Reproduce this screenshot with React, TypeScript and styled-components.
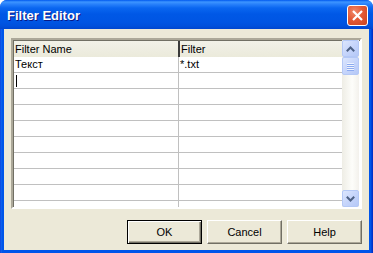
import React from "react";
import styled, { createGlobalStyle } from "styled-components";

const Global = createGlobalStyle`
  html, body { margin: 0; padding: 0; background: #ffffff; }
  body { font-family: "Liberation Sans", Arial, sans-serif; }
`;

const Window = styled.div`
  width: 373px;
  height: 253px;
  box-sizing: border-box;
  display: flex;
  flex-direction: column;
  border-radius: 7px 7px 0 0;
  background: linear-gradient(to right, #0831d9 0, #166aee 1px, #0055ea 2px, #0055ea 371px, #0032c8 372px);
  overflow: hidden;
`;

const TitleBar = styled.div`
  height: 29px;
  flex: none;
  display: flex;
  align-items: center;
  justify-content: space-between;
  padding: 0 5px 0 7px;
  background: linear-gradient(
    to bottom,
    #0058ee 0px,
    #3d95ff 2px,
    #2a82fb 4px,
    #0a66f0 8px,
    #0058e6 14px,
    #0055e3 22px,
    #0050dc 26px,
    #0046cf 29px
  );
`;

const Title = styled.span`
  font-family: "Liberation Sans", Arial, sans-serif;
  font-weight: bold;
  font-size: 13px;
  color: #ffffff;
  text-shadow: 1px 1px 0 #0a1883;
  margin-top: 2px;
`;

const CloseButton = styled.div`
  width: 21px;
  height: 21px;
  box-sizing: border-box;
  border: 1px solid #ffffff;
  border-radius: 3px;
  background: radial-gradient(circle at 35% 30%, #f08a6c 0%, #e35a36 45%, #c8431f 100%);
  display: flex;
  align-items: center;
  justify-content: center;
  margin-top: 2px;
`;

const Body = styled.div`
  flex: 1;
  margin: 0 4px 4px 4px;
  background: #ece9d8;
  padding: 9px 7px 6px 7px;
  display: flex;
  flex-direction: column;
`;

const Grid = styled.div`
  height: 171px;
  box-sizing: border-box;
  border-style: solid;
  border-width: 2px;
  border-color: #aca899 #ffffff #ffffff #aca899;
  box-shadow: inset 1px 1px 0 #716f64;
  display: flex;
  background: #ffffff;
`;

const TableArea = styled.div`
  flex: 1;
  display: flex;
  flex-direction: column;
  overflow: hidden;
  padding-top: 1px;
  padding-left: 1px;
`;

const HeaderRow = styled.div`
  height: 16px;
  flex: none;
  display: flex;
  background: linear-gradient(to bottom, #f2f1e8, #ebeadb);
`;

const HeaderCell = styled.div<{ $w?: number }>`
  ${(p) => (p.$w ? `width: ${p.$w}px; flex: none;` : "flex: 1;")}
  box-sizing: border-box;
  font-size: 11px;
  line-height: 16px;
  color: #000;
  padding-left: 1px;
  white-space: nowrap;
  overflow: hidden;
  border-right: ${(p) => (p.$w ? "2px solid #3a3a3a" : "none")};
`;

const Row = styled.div`
  height: 16px;
  flex: none;
  box-sizing: border-box;
  display: flex;
  border-bottom: 1px solid #c0c0c0;
  background: #ffffff;
`;

const Cell = styled.div<{ $w?: number }>`
  ${(p) => (p.$w ? `width: ${p.$w}px; flex: none;` : "flex: 1;")}
  box-sizing: border-box;
  font-size: 11px;
  line-height: 15px;
  color: #000;
  padding-left: 1px;
  white-space: nowrap;
  overflow: hidden;
  border-right: ${(p) => (p.$w ? "1px solid #c0c0c0" : "none")};
  display: flex;
  align-items: center;
`;

const Caret = styled.span`
  display: block;
  width: 1px;
  height: 12px;
  background: #000;
  margin-left: 1px;
`;

const Scrollbar = styled.div`
  width: 17px;
  flex: none;
  display: flex;
  flex-direction: column;
  background: linear-gradient(to right, #eeede5, #fdfdfa 60%, #f3f1ec);
  margin-right: 1px;
`;

const ScrollButton = styled.div`
  width: 17px;
  height: 17px;
  box-sizing: border-box;
  border: 1px solid #b4c8f6;
  border-radius: 2px;
  background: linear-gradient(135deg, #dce6fd 0%, #c6d5fb 50%, #b5c8f7 100%);
  display: flex;
  align-items: center;
  justify-content: center;
  flex: none;
`;

const Thumb = styled(ScrollButton)`
  height: 18px;
  flex-direction: column;
  gap: 1px;
`;

const Grip = styled.span`
  display: block;
  width: 7px;
  height: 1px;
  background: #eef3fe;
  box-shadow: 0 1px 0 #8caaf0;
`;

const Track = styled.div`
  flex: 1;
`;

const ButtonRow = styled.div`
  margin-top: 11px;
  display: flex;
  justify-content: flex-end;
  gap: 5px;
`;

const Button = styled.div<{ $default?: boolean }>`
  width: 75px;
  height: 24px;
  box-sizing: border-box;
  display: flex;
  align-items: center;
  justify-content: center;
  font-size: 11px;
  color: #000;
  background: #ece9d8;
  border: 1px solid;
  border-color: ${(p) => (p.$default ? "#000000" : "#ffffff #716f64 #716f64 #ffffff")};
  box-shadow: ${(p) =>
    p.$default
      ? "inset 1px 1px 0 #ffffff, inset -1px -1px 0 #716f64, inset -2px -2px 0 #aca899"
      : "inset -1px -1px 0 #aca899"};
`;

const rows = [
  ["Текст", "*.txt"],
  ["", ""],
  ["", ""],
  ["", ""],
  ["", ""],
  ["", ""],
  ["", ""],
  ["", ""],
  ["", ""],
  ["", ""],
];

const Arrow = ({ up }: { up?: boolean }) => (
  <svg width="9" height="6" viewBox="0 0 9 6">
    <path
      d={up ? "M0.8 5.2 L4.5 1.5 L8.2 5.2" : "M0.8 0.8 L4.5 4.5 L8.2 0.8"}
      fill="none"
      stroke="#4d6185"
      strokeWidth="2"
    />
  </svg>
);

export default function App() {
  return (
    <>
      <Global />
      <Window>
        <TitleBar>
          <Title>Filter Editor</Title>
          <CloseButton>
            <svg width="13" height="13" viewBox="0 0 13 13">
              <path d="M2 2 L11 11 M11 2 L2 11" stroke="#fff" strokeWidth="2.2" />
            </svg>
          </CloseButton>
        </TitleBar>
        <Body>
          <Grid>
            <TableArea>
              <HeaderRow>
                <HeaderCell $w={166}>Filter Name</HeaderCell>
                <HeaderCell>Filter</HeaderCell>
              </HeaderRow>
              {rows.map((r, i) => (
                <Row key={i}>
                  <Cell $w={165}>{i === 1 ? <Caret /> : r[0]}</Cell>
                  <Cell>{r[1]}</Cell>
                </Row>
              ))}
            </TableArea>
            <Scrollbar>
              <ScrollButton>
                <Arrow up />
              </ScrollButton>
              <Thumb>
                <Grip />
                <Grip />
                <Grip />
                <Grip />
              </Thumb>
              <Track />
              <ScrollButton>
                <Arrow />
              </ScrollButton>
            </Scrollbar>
          </Grid>
          <ButtonRow>
            <Button $default>OK</Button>
            <Button>Cancel</Button>
            <Button>Help</Button>
          </ButtonRow>
        </Body>
      </Window>
    </>
  );
}
